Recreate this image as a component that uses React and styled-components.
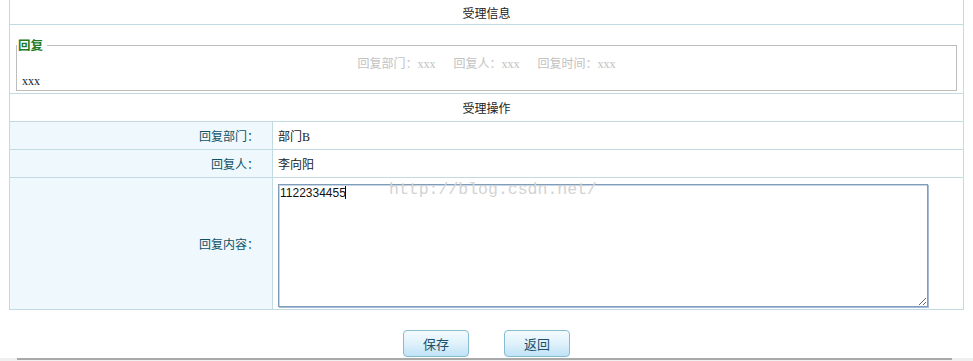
import React from 'react'
import styled, { createGlobalStyle } from 'styled-components'

const GlobalStyle = createGlobalStyle`
  html, body {
    margin: 0;
    padding: 0;
    background: #fff;
    overflow: hidden;
  }
  body {
    font-family: 'Liberation Serif', 'Noto Sans CJK SC', serif;
    font-size: 12px;
    color: #333;
  }
`

const App = () => {
  return (
    <>
      <GlobalStyle />
      <Page>
        <Panel>
          <TitleRow height={24}>受理信息</TitleRow>
          <InfoRow>
            <Fieldset>
              <Legend>回复</Legend>
              <MetaLine>
                <MetaItem>回复部门：xxx</MetaItem>
                <MetaItem>回复人：xxx</MetaItem>
                <MetaItem>回复时间：xxx</MetaItem>
              </MetaLine>
              <ReplyText>xxx</ReplyText>
            </Fieldset>
          </InfoRow>
          <TitleRow height={27}>受理操作</TitleRow>
          <FormRow height={27}>
            <Label>回复部门：</Label>
            <Value>部门B</Value>
          </FormRow>
          <FormRow height={27}>
            <Label>回复人：</Label>
            <Value>李向阳</Value>
          </FormRow>
          <FormRow height={131} last>
            <Label>回复内容：</Label>
            <Value top>
              <TextArea defaultValue='1122334455' />
              <Caret />
              <Watermark>http://blog.csdn.net/</Watermark>
            </Value>
          </FormRow>
        </Panel>
        <Actions>
          <Button type='button'>保存</Button>
          <Button type='button'>返回</Button>
        </Actions>
      </Page>
      <ScrollStrip>
        <ScrollThumb />
      </ScrollStrip>
    </>
  )
}

const Page = styled.div`
  padding: 0 9px;
  height: 358px;
  box-sizing: border-box;
`

const Panel = styled.div`
  width: 955px;
  box-sizing: border-box;
  border-left: 1px solid #c2dbe3;
  border-right: 1px solid #c2dbe3;
`

const TitleRow = styled.div`
  height: ${p => p.height}px;
  border-bottom: 1px solid #c2dbe3;
  display: flex;
  align-items: center;
  justify-content: center;
  font-family: 'Noto Sans CJK SC', sans-serif;
  font-size: 12px;
  color: #222;
`

const InfoRow = styled.div`
  height: 69px;
  box-sizing: border-box;
  padding: 13px 6px 3px 6px;
  border-bottom: 1px solid #c2dbe3;
`

const Fieldset = styled.fieldset`
  margin: 0;
  padding: 0 0 0 5px;
  border: 1px solid #bdbdbd;
  min-width: 0;
`

const Legend = styled.legend`
  padding: 0 4px 0 1px;
  margin-left: -5px;
  font-family: 'Noto Sans CJK SC', sans-serif;
  font-weight: bold;
  font-size: 12.5px;
  line-height: 14px;
  color: #237a23;
`

const MetaLine = styled.div`
  margin-top: 2px;
  height: 18px;
  display: flex;
  justify-content: center;
  align-items: center;
  gap: 18px;
  color: #c2c2c2;
  padding-right: 5px;
`

const MetaItem = styled.span`
  font-size: 12px;
`

const ReplyText = styled.div`
  height: 18px;
  line-height: 18px;
  color: #222;
`

const FormRow = styled.div`
  display: flex;
  height: ${p => p.height}px;
  border-bottom: 1px solid #c2dbe3;
  box-sizing: content-box;
`

const Label = styled.div`
  width: 263px;
  flex: none;
  border-right: 1px solid #c2dbe3;
  background: #eef8fd;
  display: flex;
  align-items: center;
  justify-content: flex-end;
  padding-right: 13px;
  box-sizing: border-box;
  font-family: 'Noto Sans CJK SC', sans-serif;
  color: #0f5267;
`

const Value = styled.div`
  position: relative;
  flex: 1;
  display: flex;
  align-items: ${p => (p.top ? 'flex-start' : 'center')};
  padding: ${p => (p.top ? '6px 0 0 5px' : '0 0 0 5px')};
  font-size: 12px;
  color: #222;
`

const TextArea = styled.textarea`
  width: 650px;
  height: 123px;
  box-sizing: border-box;
  margin: 0;
  padding: 1px 1px;
  border: 1px solid #7f9db9;
  box-shadow: inset 1px 1px 0 #c7d4e8, 1px 1px 0 #a9bddb;
  font-family: 'Liberation Sans', sans-serif;
  font-size: 12px;
  line-height: 14px;
  color: #111;
  outline: none;
  resize: both;
`

const Caret = styled.span`
  position: absolute;
  left: 72px;
  top: 8px;
  width: 1px;
  height: 13px;
  background: #000;
`

const Watermark = styled.span`
  position: absolute;
  z-index: 2;
  left: 116px;
  top: 2px;
  font-family: 'Liberation Mono', monospace;
  font-size: 16.5px;
  line-height: 20px;
  color: #d3d3d3;
  pointer-events: none;
`

const Actions = styled.div`
  width: 955px;
  margin-top: 20px;
  display: flex;
  justify-content: center;
  gap: 35px;
`

const Button = styled.button`
  width: 66px;
  height: 27px;
  padding: 0;
  border: 1px solid #85bccf;
  border-radius: 4px;
  background: linear-gradient(#f4fbfe, #dff1fb 50%, #bfe3f6);
  font-family: 'Noto Sans CJK SC', sans-serif;
  font-size: 13px;
  color: #1c4f6c;
  cursor: pointer;
`

const ScrollStrip = styled.div`
  height: 3px;
  background: #f0f0f0;
  padding-left: 17px;
`

const ScrollThumb = styled.div`
  width: 935px;
  height: 2px;
  background: #a9a9a9;
`

export default App
